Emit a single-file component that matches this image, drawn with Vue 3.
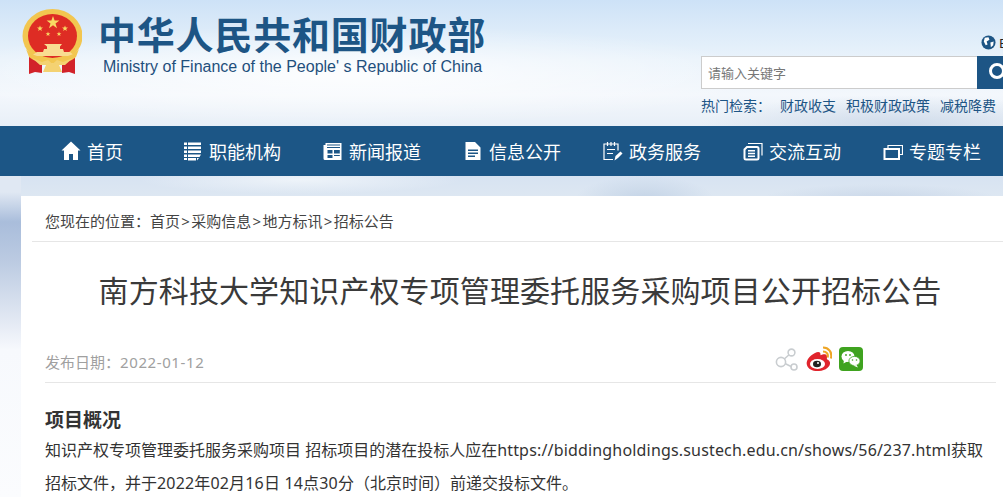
<template>
  <div class="page">
    <header class="top">
      <div class="brand">
        <svg class="emblem" viewBox="7 4 60 66" width="60" height="66">
          <path d="M14 50 L18 50 L27 58 L27 68 L20 67 L14 69 Z" fill="#d2232a" />
          <path d="M60 50 L56 50 L47 58 L47 68 L54 67 L60 69 Z" fill="#d2232a" />
          <ellipse cx="37.5" cy="31" rx="30" ry="27" fill="#f2c650" />
          <ellipse cx="37.5" cy="31" rx="24.5" ry="22" fill="#de2c24" />
          <path d="M38 11 L39.6 15.6 L44.4 15.6 L40.5 18.5 L42 23.2 L38 20.3 L34 23.2 L35.5 18.5 L31.6 15.6 L36.4 15.6 Z" fill="#f8d963" />
          <path d="M25 20.5 L25.8 22.6 L28 22.6 L26.2 24 L26.9 26 L25 24.8 L23.1 26 L23.8 24 L22 22.6 L24.2 22.6 Z" fill="#f8d963" />
          <path d="M50 20.5 L50.8 22.6 L53 22.6 L51.2 24 L51.9 26 L50 24.8 L48.1 26 L48.8 24 L47 22.6 L49.2 22.6 Z" fill="#f8d963" />
          <path d="M33 26.5 L33.6 28.2 L35.4 28.2 L34 29.3 L34.5 31 L33 30 L31.5 31 L32 29.3 L30.6 28.2 L32.4 28.2 Z" fill="#f8d963" />
          <path d="M44 26.5 L44.6 28.2 L46.4 28.2 L45 29.3 L45.5 31 L44 30 L42.5 31 L43 29.3 L41.6 28.2 L43.4 28.2 Z" fill="#f8d963" />
          <path d="M29 39 H47 L45 41.5 V44 H48 L49 47 H55 L60 51 H16 L22 47 H28 L29 44 H32 V41.5 Z" fill="#f9dc92" />
          <path d="M11 44 C18 56 57 56 64 44 L61 52 C52 61 24 61 14 52 Z" fill="#f2c650" />
          <path d="M17 53 L27 57 L33 55 L37.5 59 L42 55 L48 57 L58 53 L50 60 L44 60 L47 67 L28 67 L31 60 L25 60 Z" fill="#f4d272" />
        </svg>
        <div class="brand-text">
          <div class="brand-cn">中华人民共和国财政部</div>
          <div class="brand-en">Ministry of Finance of the People' s Republic of China</div>
        </div>
      </div>
      <div class="tools">
        <div class="lang">
          <svg viewBox="0 0 16 16" width="15" height="15">
            <circle cx="8" cy="8" r="7.5" fill="#1d5585" />
            <path d="M4 3 L8 2.5 L9 5 L6 7 L7 10 L5 11 L3 7 Z M10 8 L13.5 7 L13 11 L10.5 13 Z" fill="#fff" />
          </svg>
          <span>E</span>
        </div>
        <form class="search" @submit.prevent>
          <input type="text" placeholder="请输入关键字" />
          <button type="button" aria-label="搜索">
            <svg viewBox="0 0 27 33" width="27" height="33">
              <circle cx="20" cy="15" r="6.5" fill="none" stroke="#fff" stroke-width="3" />
            </svg>
          </button>
        </form>
        <div class="hot">
          <span class="hot-label">热门检索：</span>
          <a class="hot-a">财政收支</a>
          <a class="hot-b">积极财政政策</a>
          <a class="hot-c">减税降费</a>
        </div>
      </div>
    </header>

    <nav class="nav">
      <a v-for="item in navItems" :key="item.label" class="nav-item">
        <svg viewBox="0 0 20 20" width="20" height="20">
          <path
            v-for="(p, i) in item.icon"
            :key="i"
            :d="p.d"
            :class="p.cls || 'ic-fill'"
            :fill-rule="p.cls ? null : 'evenodd'"
          />
        </svg>
        <span>{{ item.label }}</span>
      </a>
    </nav>

    <main class="card">
      <div class="crumb">
        <span>您现在的位置：</span>
        <template v-for="(c, i) in crumbs" :key="c">
          <span v-if="i" class="sep">&gt;</span>
          <a>{{ c }}</a>
        </template>
      </div>
      <h1>南方科技大学知识产权专项管理委托服务采购项目公开招标公告</h1>
      <div class="meta">
        <span class="date">发布日期：<span class="digits">2022-01-12</span></span>
        <div class="share">
          <svg viewBox="0 0 24 24" width="24" height="24">
            <g fill="#fff" stroke="#c9cdd0" stroke-width="1.6">
              <path d="M7 14 L16 6 M7 15 L17 20" fill="none" />
              <circle cx="16.5" cy="5.5" r="3.4" />
              <circle cx="6" cy="15" r="4.6" />
              <circle cx="19" cy="20" r="3" />
            </g>
          </svg>
          <svg viewBox="0 0 26 26" width="26" height="26">
            <path d="M9 7 C3 10 0 15 0.8 18.5 C2 24 8 25.5 13 25 C20 24.5 24.5 20.5 24 16.5 C23.6 14 21 13.5 20.8 13 C22 9.5 20 7.5 16.5 8.5 L14.5 9.3 C15 6 12.5 5 9 7 Z" fill="#e0242c" />
            <ellipse cx="11.5" cy="18" rx="7.5" ry="5" fill="#fff" />
            <ellipse cx="11" cy="18" rx="4" ry="3.2" fill="#222" />
            <circle cx="12" cy="17" r="1" fill="#fff" />
            <path d="M17 1.5 C22.5 1.5 26.5 6 25 12.5 M17 5.5 C20.5 5.5 22.5 8 21.6 11.5" fill="none" stroke="#eea526" stroke-width="2.2" />
          </svg>
          <svg viewBox="0 0 24 24" width="24" height="24">
            <rect width="24" height="24" rx="4" fill="#3fa31f" />
            <ellipse cx="9" cy="9.5" rx="6.5" ry="5.5" fill="#fff" />
            <path d="M5 13 L4.5 16.5 L9 14 Z" fill="#fff" />
            <ellipse cx="15.5" cy="14" rx="5.6" ry="4.6" fill="#fff" stroke="#3fa31f" stroke-width="0.8" />
            <path d="M17.5 18 L19 20.5 L14 18.4 Z" fill="#fff" />
            <circle cx="7" cy="8" r="0.9" fill="#3fa31f" />
            <circle cx="11" cy="8" r="0.9" fill="#3fa31f" />
            <circle cx="13.5" cy="13" r="0.8" fill="#3fa31f" />
            <circle cx="17.5" cy="13" r="0.8" fill="#3fa31f" />
          </svg>
        </div>
      </div>
      <section class="body">
        <h2>项目概况</h2>
        <p>
          <span class="line">知识产权专项管理委托服务采购项目 招标项目的潜在投标人应在<span class="latin">https://biddingholdings.sustech.edu.cn/shows/56/237.html</span>获取</span>
          <span class="line">招标文件，并于<span class="latin">2022年02月16日 14点30分</span>（北京时间）前递交投标文件。</span>
        </p>
      </section>
    </main>
  </div>
</template>

<script setup>
const crumbs = ["首页", "采购信息", "地方标讯", "招标公告"];

const navItems = [
  {
    label: "首页",
    icon: [{ d: "M10 0.5 L19.5 9.5 H17 V19 H12 V13 H8 V19 H3 V9.5 H0.5 Z" }],
  },
  {
    label: "职能机构",
    icon: [
      { d: "M1 1.5 H4 V4 H1 Z M5 1.5 H18 V4 H5 Z M1 5.5 H4 V8 H1 Z M5 5.5 H18 V8 H5 Z M1 9.5 H4 V12 H1 Z M5 9.5 H18 V12 H5 Z M1 13.5 H4 V16 H1 Z M5 13.5 H18 L16.5 16 H5 Z M1 17 H4 V19 H1 Z M5 17 H13 V19.5 H5 Z M14 17 H16 L14 19.5 Z" },
    ],
  },
  {
    label: "新闻报道",
    icon: [
      { d: "M0.5 4 H2.5 V2 H18.5 V19 H2 Q0.5 19 0.5 17.5 Z M4 3.5 V4.6 H17 V3.5 Z M4 6 V7 H17 V6 Z M4.5 9 V12.5 H9.5 V9 Z M11 9 V12.5 H16.8 V9 Z M4.5 14 V17 H9.5 V14 Z M11 14 V15 H16.8 V14 Z" },
    ],
  },
  {
    label: "信息公开",
    icon: [
      { d: "M2.5 1 H12 L17.5 6.5 V19 H2.5 Z M5 8.5 V10 H15 V8.5 Z M5 11.5 V13 H15 V11.5 Z M5 14.5 V16 H12 V14.5 Z" },
    ],
  },
  {
    label: "政务服务",
    icon: [
      { cls: "ic-thin", d: "M10 18.5 H1 V3 H15 V9.5 M4.5 1 V5 M8 1 V5 M11.5 1 V5 M4 8.5 H12 M4 12.5 H10" },
      { d: "M11.5 19.5 L12.5 15 L17.5 10.5 L19.5 12.5 L15 17 Z" },
    ],
  },
  {
    label: "交流互动",
    icon: [
      { cls: "ic-line", d: "M4 6 H14 Q15.5 6 15.5 7.5 V17 Q15.5 18.5 14 18.5 H3 Q1.5 18.5 1.5 17 V8.5 Z" },
      { cls: "ic-thin", d: "M5 2.5 H19 V14.5" },
      { d: "M5 9 H12 V10.5 H5 Z M5 11.7 H12 V13.2 H5 Z M5 14.4 H12 V15.9 H5 Z" },
    ],
  },
  {
    label: "专题专栏",
    icon: [
      { cls: "ic-line", d: "M1.5 8 H16 V18 H1.5 Z" },
      { cls: "ic-thin", d: "M5 8 V4.5 H19.5 V13.5 H16" },
    ],
  },
];
</script>

<style>
html,
body {
  margin: 0;
  background: #fff;
}
</style>

<style scoped>
.page {
  width: 1003px;
  height: 497px;
  overflow: hidden;
  font-family: "Noto Sans", "Noto Sans CJK SC", sans-serif;
  background:
    radial-gradient(ellipse 70px 24px at 645px 200px, #c3d3e6 0, rgba(200, 215, 232, 0) 100%),
    radial-gradient(ellipse 120px 16px at 880px 200px, #c8d6e8 0, rgba(205, 218, 234, 0) 100%),
    radial-gradient(ellipse 160px 14px at 300px 180px, rgba(240, 245, 250, 0.9) 0, rgba(240, 245, 250, 0) 100%),
    linear-gradient(#e0e8f3 0, #e0e8f3 192px, #a9bddb 222px, #bccbe2 262px, #e2e8f3 320px, #f7f9fd 350px, #fbfcfe 497px) 0 0 / 21px 100% no-repeat,
    linear-gradient(#cde2f7 0, #dcebf9 30px, #eaf3fb 60px, #f0f5fb 100px, #e4ecf6 126px, #d7e3f2 176px, #dde7f2 196px);
}

.top {
  height: 126px;
  display: flex;
  justify-content: space-between;
  box-sizing: border-box;
  padding-left: 22px;
  overflow: hidden;
  background:
    radial-gradient(ellipse 200px 30px at 900px 125px, rgba(190, 205, 225, 0.6) 0, rgba(190, 205, 225, 0) 100%),
    radial-gradient(ellipse 420px 50px at 350px 75px, rgba(255, 255, 255, 0.85) 0, rgba(255, 255, 255, 0) 100%),
    linear-gradient(#cde2f7 0, #dcebf9 30px, #eaf3fb 60px, #f3f7fc 95px, #e8eff7 126px);
}

.brand {
  display: flex;
  align-items: flex-start;
  gap: 16px;
  padding-top: 9px;
}

.emblem {
  flex: none;
}

.brand-text {
  padding-top: 4px;
}

.brand-cn {
  font-size: 38px;
  font-weight: 700;
  line-height: 42px;
  letter-spacing: 0.8px;
  color: #1d5585;
  white-space: nowrap;
}

.brand-en {
  margin-top: 3px;
  margin-left: 5px;
  font-family: "Liberation Sans", sans-serif;
  font-size: 16px;
  line-height: 18px;
  color: #1f4f7c;
  white-space: nowrap;
}

.tools {
  width: 302px;
  flex: none;
}

.lang {
  display: flex;
  align-items: center;
  gap: 3px;
  height: 15px;
  margin: 35px 0 6px 280px;
  font-size: 13px;
  color: #222;
  white-space: nowrap;
}

.lang svg {
  flex: none;
}

.search {
  display: flex;
  height: 33px;
}

.search input {
  width: 276px;
  height: 33px;
  box-sizing: border-box;
  border: 1px solid #ccc;
  border-right: 0;
  padding: 0 6px;
  background: #fff;
  font-family: inherit;
  font-size: 13px;
  outline: none;
}

.search input::placeholder {
  color: #777;
  opacity: 1;
}

.search button {
  width: 26px;
  height: 33px;
  border: 0;
  padding: 0;
  background: #1d5585;
  overflow: hidden;
}

.search svg {
  display: block;
}

.hot {
  display: flex;
  margin-top: 8px;
  font-size: 14px;
  line-height: 18px;
  color: #1d5585;
  white-space: nowrap;
}

.hot-label {
  width: 79px;
}

.hot-a {
  width: 66px;
}

.hot-b {
  width: 94px;
}

.nav {
  height: 50px;
  display: flex;
  padding-left: 22px;
  background: #1c5686;
  color: #fff;
}

.nav-item {
  flex: none;
  width: 140px;
  display: flex;
  align-items: center;
  justify-content: center;
  gap: 6px;
  font-size: 18px;
  white-space: nowrap;
}

.nav-item svg {
  flex: none;
}

.ic-fill {
  fill: #fff;
}

.ic-line {
  fill: none;
  stroke: #fff;
  stroke-width: 2;
}

.ic-thin {
  fill: none;
  stroke: #fff;
  stroke-width: 1.2;
}

.card {
  margin: 20px 0 0 21px;
  padding-top: 1px;
  height: 300px;
  background: #fff;
}

.crumb {
  display: flex;
  height: 44px;
  margin-left: 11px;
  padding-left: 13px;
  border-bottom: 1px solid #e6e6e6;
  font-size: 15px;
  line-height: 48px;
  color: #444;
}

.sep {
  margin: 0 1.3px;
}

.card h1 {
  margin: 31px 0 0;
  padding-left: 16px;
  font-size: 30px;
  font-weight: 400;
  line-height: 36px;
  letter-spacing: 0.1px;
  color: #3a3a3a;
  text-align: center;
  white-space: nowrap;
}

.meta {
  display: flex;
  justify-content: space-between;
  align-items: center;
  height: 44px;
  margin: 29px 7px 0 24px;
  border-bottom: 1px solid #e6e6e6;
}

.date {
  padding-top: 2px;
  font-size: 15px;
  color: #a0a0a0;
}

.digits {
  letter-spacing: 0.6px;
}

.share {
  display: flex;
  align-items: center;
  gap: 7px;
  margin-right: 133px;
  margin-bottom: 2px;
}

.body {
  margin: 23px 18px 0 24px;
  color: #333;
}

.body h2 {
  margin: 0;
  font-size: 19px;
  line-height: 28px;
  font-weight: 700;
}

.body p {
  margin: 0;
  font-size: 16px;
  line-height: 33px;
}

.line {
  display: block;
  white-space: nowrap;
}

.latin {
  letter-spacing: 0.17px;
}
</style>
